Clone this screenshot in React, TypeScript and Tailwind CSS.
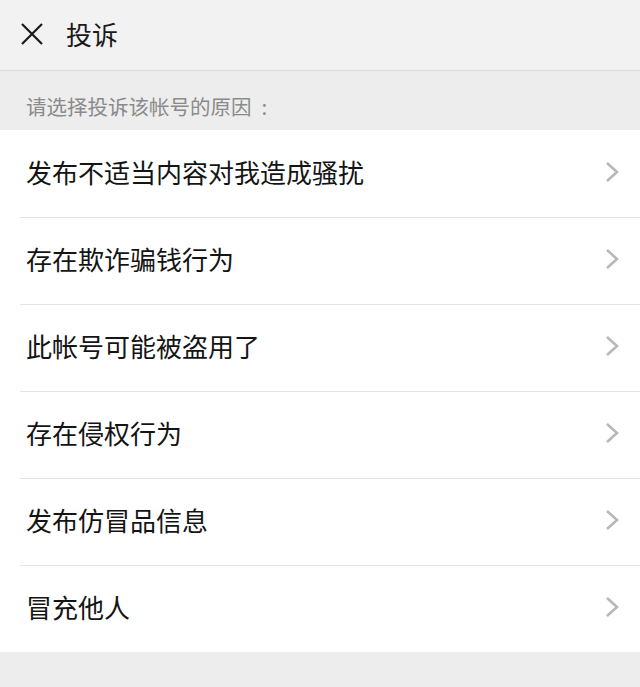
const reasons = [
  '发布不适当内容对我造成骚扰',
  '存在欺诈骗钱行为',
  '此帐号可能被盗用了',
  '存在侵权行为',
  '发布仿冒品信息',
  '冒充他人',
];

const font = { fontFamily: '"Noto Sans CJK SC", "Noto Sans", sans-serif' };

export default function App() {
  return (
    <div className="min-h-[687px] bg-[#ededed]" style={font}>
      <div className="flex h-[71px] items-center border-b border-[#dcdcdc] bg-[#f2f2f2] pb-[3px]">
        <button className="ml-[20px] flex h-[24px] w-[24px] items-center justify-center text-[#1a1a1a]">
          <svg width="24" height="24" viewBox="0 0 24 24" fill="none" stroke="currentColor" strokeWidth="2.2" strokeLinecap="butt">
            <path d="M2 2 L22 22 M22 2 L2 22" />
          </svg>
        </button>
        <h1 className="ml-[22px] text-[26px] leading-none text-[#1a1a1a]">投诉</h1>
      </div>

      <div className="flex h-[59px] items-center px-[26px] pt-[12px] text-[20.5px] leading-none text-[#8a8a8a]">
        请选择投诉该帐号的原因<span className="ml-[10px]">:</span>
      </div>

      <ul className="bg-white">
        {reasons.map((reason, i) => (
          <li key={reason} className="pl-[20px]">
            <div
              className={`flex h-[87px] items-center justify-between pr-[20px] pb-[4px] ${i > 0 ? 'border-t border-[#e5e5e5]' : ''}`}
            >
              <span className="pl-[6px] text-[26px] leading-none text-[#141414]">{reason}</span>
              <svg width="15" height="22" viewBox="0 0 15 22" fill="none" stroke="#b8b8b8" strokeWidth="2.6">
                <path d="M2 2 L12 11 L2 20" />
              </svg>
            </div>
          </li>
        ))}
      </ul>
    </div>
  );
}
